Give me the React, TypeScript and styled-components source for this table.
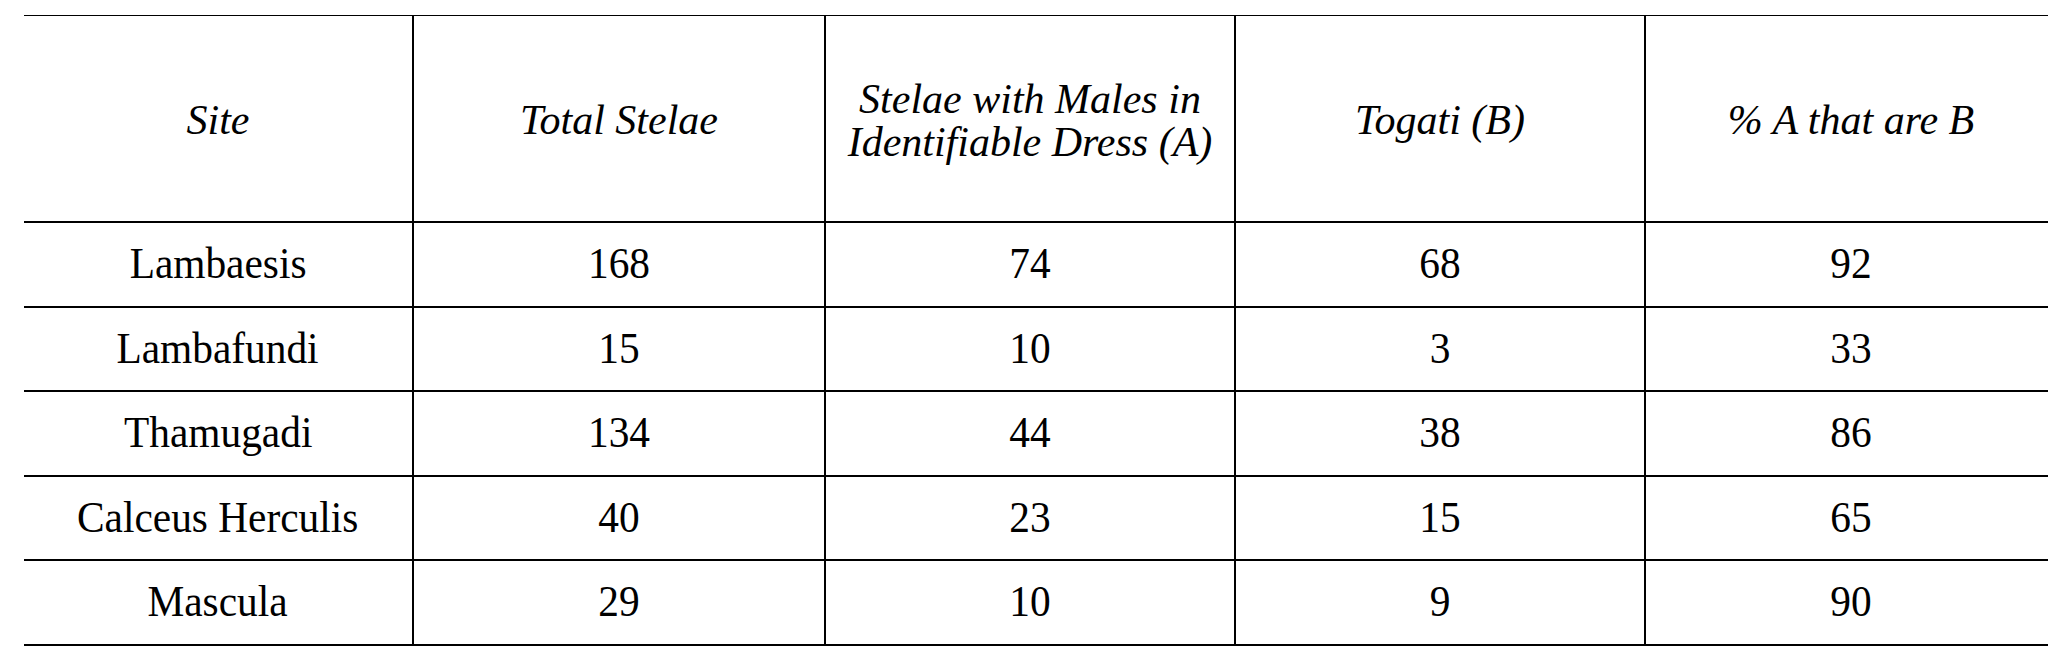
import React from 'react';
import styled, { createGlobalStyle } from 'styled-components';

const GlobalStyle = createGlobalStyle`
  html, body {
    margin: 0;
    padding: 0;
    background: #ffffff;
  }

  body {
    width: 2048px;
    height: 655px;
    overflow: hidden;
  }
`;

const headers = [
  ['Site'],
  ['Total Stelae'],
  ['Stelae with Males in', 'Identifiable Dress (A)'],
  ['Togati (B)'],
  ['% A that are B'],
];

const rows = [
  ['Lambaesis', '168', '74', '68', '92'],
  ['Lambafundi', '15', '10', '3', '33'],
  ['Thamugadi', '134', '44', '38', '86'],
  ['Calceus Herculis', '40', '23', '15', '65'],
  ['Mascula', '29', '10', '9', '90'],
];

const App = () => {
  return (
    <>
      <GlobalStyle />
      <Page>
        <Table>
          {headers.map((lines, i) => (
            <HeadCell key={`h-${i}`}>
              {lines.map(line => (
                <Line key={line}>{line}</Line>
              ))}
            </HeadCell>
          ))}
          {rows.map((row, r) =>
            row.map((value, c) => (
              <Cell key={`${r}-${c}`}>
                <Value>{value}</Value>
              </Cell>
            ))
          )}
        </Table>
      </Page>
    </>
  );
};

export default App;

const Page = styled.div`
  padding: 15px 0 0 24px;
  width: 2048px;
  box-sizing: border-box;
`;

const Table = styled.div`
  display: grid;
  grid-template-columns: 388px 410px 408px 408px 410px;
  grid-template-rows: 205px repeat(5, 82.6px);
  gap: 2px;

  width: max-content;
  background-color: #000000;
  border-top: 1px solid #000000;
  border-bottom: 2px solid #000000;

  font-family: 'Liberation Serif', 'Times New Roman', serif;
  color: #000000;
`;

const Cell = styled.div`
  display: flex;
  align-items: center;
  justify-content: center;

  background-color: #ffffff;
  font-size: 44px;
  line-height: 1.15;
  white-space: nowrap;
`;

// the print face is a little narrower than Liberation Serif
const Value = styled.span`
  display: inline-block;
  transform: scaleX(0.94);
`;

const HeadCell = styled(Cell)`
  flex-direction: column;
  font-size: 42px;
  font-style: italic;
  line-height: 43px;
  padding-top: 4px;
`;

const Line = styled.span`
  display: block;
`;
